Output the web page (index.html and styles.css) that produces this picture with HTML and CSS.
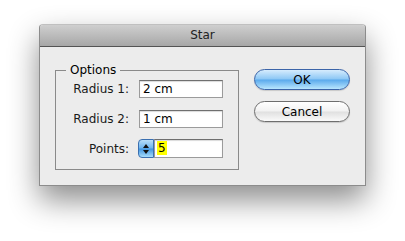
FILE: index.html
```html
<!DOCTYPE html>
<html lang="en">

<head>
    <meta charset="UTF-8">
    <meta name="viewport" content="width=device-width, initial-scale=1.0">
    <title>Star</title>
    <link rel="stylesheet" href="styles.css">
</head>

<body>
    <div class="window">
        <div class="titlebar">Star</div>
        <div class="content">
            <fieldset class="options">
                <legend>Options</legend>
                <div class="row">
                    <span class="label">Radius 1:</span>
                    <div class="field">2 cm</div>
                </div>
                <div class="row">
                    <span class="label">Radius 2:</span>
                    <div class="field">1 cm</div>
                </div>
                <div class="row">
                    <span class="label">Points:</span>
                    <div class="stepper">
                        <span class="arrow up"></span>
                        <span class="arrow down"></span>
                    </div>
                    <div class="field short"><span class="selected">5</span></div>
                </div>
            </fieldset>
            <div class="buttons">
                <button class="btn default">OK</button>
                <button class="btn">Cancel</button>
            </div>
        </div>
    </div>
</body>

</html>
```

FILE: styles.css
```css
/* Reset */
* {
    margin: 0;
    padding: 0;
    box-sizing: border-box;
}

html {
    height: 100%;
    background-color: #fff;
}

body {
    font-family: "DejaVu Sans", sans-serif;
    font-size: 12px;
    color: #000;
    min-height: 100%;
    padding: 24px 0 0 39px;
}

/* Window */
.window {
    position: relative;
    width: 327px;
    height: 162px;
    border: 1px solid #8c8c8c;
    border-top-color: #c0c0c0;
    border-radius: 4px 4px 0 0;
    background-color: #ececec;
    box-shadow: 0 14px 30px rgba(0, 0, 0, 0.45);
    display: flex;
    flex-direction: column;
}

.titlebar {
    height: 22px;
    line-height: 21px;
    text-align: center;
    color: #222;
    background: linear-gradient(#cfcfcf, #a7a7a7);
    border-bottom: 1px solid #545454;
    border-radius: 3px 3px 0 0;
}

.content {
    display: flex;
    gap: 15px;
    padding: 16px 0 0 15px;
}

/* Options group */
.options {
    width: 184px;
    height: 107px;
    border: 1px solid #8a8a8a;
    padding: 2px 15px 0 10px;
    display: flex;
    flex-direction: column;
    gap: 12px;
}

.options legend {
    padding: 0 4px;
    line-height: 15px;
}

.row {
    display: flex;
    align-items: center;
    height: 18px;
}

.row:last-child {
    margin-top: -1px;
    height: 19px;
}

.label {
    width: 63px;
    margin-right: 10px;
    text-align: right;
    color: #1a1a1a;
}

.field {
    width: 84px;
    height: 100%;
    background-color: #fff;
    border: 1px solid #9b9b9b;
    border-top-color: #6f6f6f;
    box-shadow: inset 0 1px 1px rgba(0, 0, 0, 0.15);
    padding-left: 3px;
    line-height: 16px;
}

.field.short {
    width: 69px;
    padding-left: 2px;
}

.selected {
    background-color: #ffff00;
    padding: 0 1px;
    display: inline-block;
    line-height: 14px;
    margin-top: 1px;
}

/* Stepper */
.stepper {
    width: 16px;
    height: 100%;
    margin-left: -1px;
    border: 1px solid #3a6fb0;
    border-radius: 4px 0 0 4px;
    background: linear-gradient(#b8def9 0%, #6cb4ee 48%, #3e93e0 52%, #a5dcfc 100%);
    display: flex;
    flex-direction: column;
    align-items: center;
    justify-content: center;
    gap: 2px;
}

.arrow {
    width: 0;
    height: 0;
    border-left: 3px solid transparent;
    border-right: 3px solid transparent;
}

.arrow.up {
    border-bottom: 4px solid #111;
}

.arrow.down {
    border-top: 4px solid #111;
}

/* Buttons */
.buttons {
    display: flex;
    flex-direction: column;
    gap: 11px;
    padding-top: 6px;
}

.btn {
    width: 96px;
    height: 21px;
    border: 1px solid #6e6e6e;
    border-radius: 11px;
    font-family: "DejaVu Sans", sans-serif;
    font-size: 12px;
    color: #000;
    background: linear-gradient(#ffffff 0%, #f2f2f2 48%, #e0e0e0 52%, #fafafa 100%);
    box-shadow: 0 1px 1px rgba(0, 0, 0, 0.15);
}

.btn.default {
    border-color: #3b64a8;
    background: linear-gradient(#d6ecfd 0%, #8cc7f5 48%, #5aa9ec 52%, #b9e6fe 100%);
}
```
